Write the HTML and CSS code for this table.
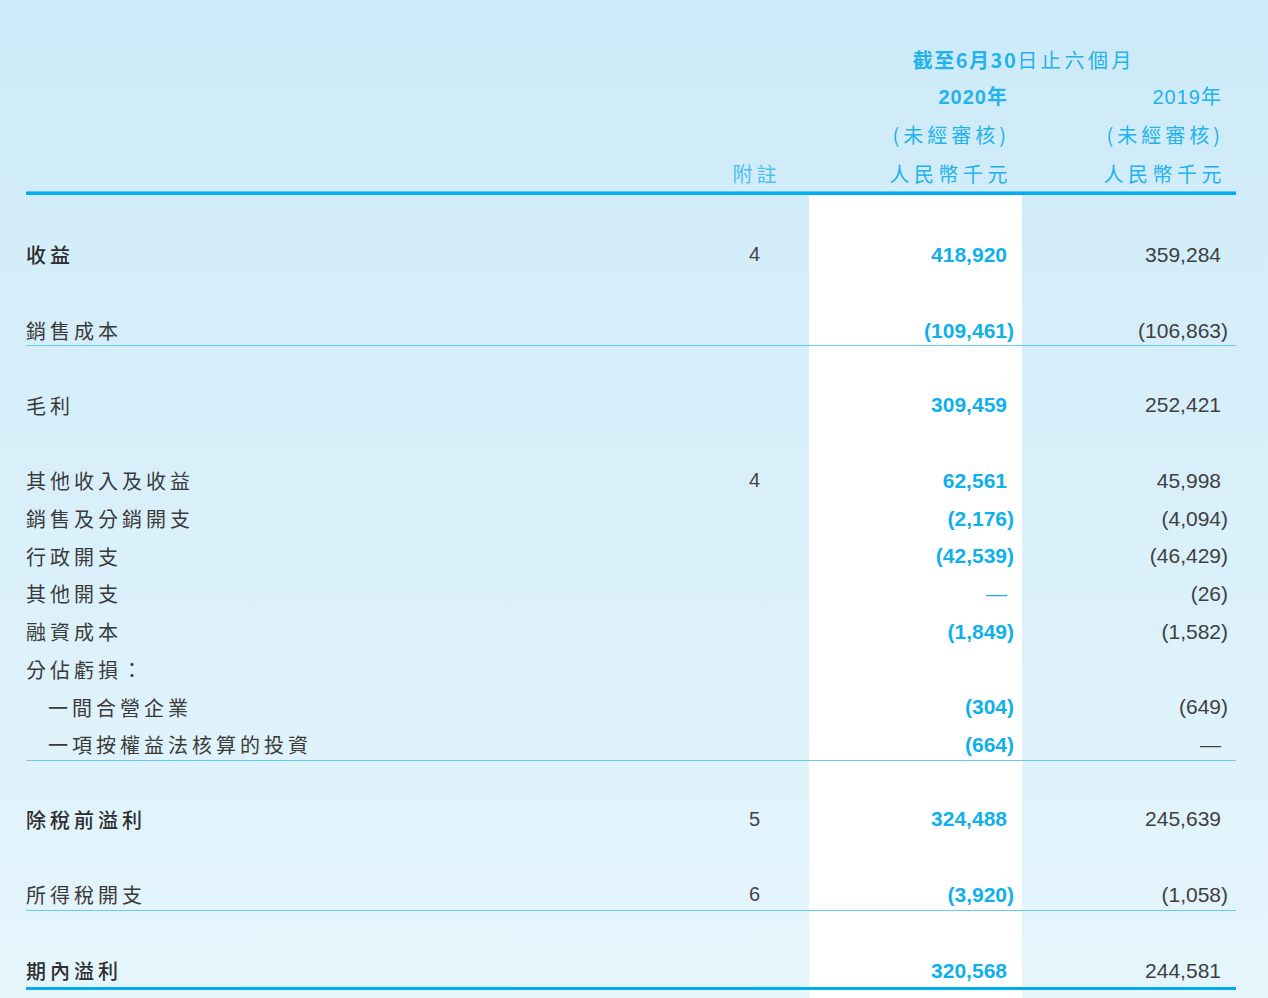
FILE: index.html
```html
<!DOCTYPE html>
<html lang="zh-Hant">
<head>
<meta charset="utf-8">
<title>簡明綜合損益表</title>
<link rel="stylesheet" href="styles.css">
</head>
<body>
<div class="page">
  <div class="head">
    <div class="hrow">
      <div class="period"><b>截至6月30</b>日止六個月</div>
    </div>
    <div class="hrow">
      <div class="hcell cur year">2020年</div>
      <div class="hcell prev year">2019年</div>
    </div>
    <div class="hrow">
      <div class="hcell cur paren">(未經審核)</div>
      <div class="hcell prev paren">(未經審核)</div>
    </div>
    <div class="hrow last">
      <div class="hnote">附註</div>
      <div class="hcell cur">人民幣千元</div>
      <div class="hcell prev">人民幣千元</div>
    </div>
  </div>
  <div class="rule-thick"></div>
  <div class="body">
    <div class="row strong"><div class="lbl">收益</div><div class="note">4</div><div class="amt cur pos">418,920</div><div class="amt prev pos">359,284</div></div>
    <div class="row line gap-b"><div class="lbl">銷售成本</div><div class="note"></div><div class="amt cur">(109,461)</div><div class="amt prev">(106,863)</div></div>
    <div class="row gap-c"><div class="lbl">毛利</div><div class="note"></div><div class="amt cur pos">309,459</div><div class="amt prev pos">252,421</div></div>
    <div class="row gap-b"><div class="lbl">其他收入及收益</div><div class="note">4</div><div class="amt cur pos">62,561</div><div class="amt prev pos">45,998</div></div>
    <div class="row"><div class="lbl">銷售及分銷開支</div><div class="note"></div><div class="amt cur">(2,176)</div><div class="amt prev">(4,094)</div></div>
    <div class="row"><div class="lbl">行政開支</div><div class="note"></div><div class="amt cur">(42,539)</div><div class="amt prev">(46,429)</div></div>
    <div class="row"><div class="lbl">其他開支</div><div class="note"></div><div class="amt cur pos dash">—</div><div class="amt prev">(26)</div></div>
    <div class="row"><div class="lbl">融資成本</div><div class="note"></div><div class="amt cur">(1,849)</div><div class="amt prev">(1,582)</div></div>
    <div class="row"><div class="lbl">分佔虧損：</div><div class="note"></div><div class="amt cur"></div><div class="amt prev"></div></div>
    <div class="row"><div class="lbl sub">一間合營企業</div><div class="note"></div><div class="amt cur">(304)</div><div class="amt prev">(649)</div></div>
    <div class="row line"><div class="lbl sub">一項按權益法核算的投資</div><div class="note"></div><div class="amt cur">(664)</div><div class="amt prev pos dash">—</div></div>
    <div class="row strong gap-c"><div class="lbl">除稅前溢利</div><div class="note">5</div><div class="amt cur pos">324,488</div><div class="amt prev pos">245,639</div></div>
    <div class="row line gap-b"><div class="lbl">所得稅開支</div><div class="note">6</div><div class="amt cur">(3,920)</div><div class="amt prev">(1,058)</div></div>
    <div class="row strong total gap-a"><div class="lbl">期內溢利</div><div class="note"></div><div class="amt cur pos">320,568</div><div class="amt prev pos">244,581</div></div>
  </div>
</div>
</body>
</html>
```

FILE: styles.css
```css
html, body {
  margin: 0;
  padding: 0;
}
body {
  width: 1268px;
  min-height: 998px;
  overflow: hidden;
  background: linear-gradient(to bottom, #cdeaf8 0%, #d9f0fa 50%, #e6f5fc 100%);
  font-family: "Noto Sans CJK TC", "Liberation Sans", sans-serif;
  color: #3c3c3c;
}
.page {
  padding-left: 26px;
  width: 1210px;
}
.head {
  padding-top: 41px;
}
.hrow {
  display: grid;
  grid-template-columns: 674px 109px 213px 214px;
  height: 37.5px;
  align-items: center;
  color: #22b2ec;
  font-size: 20px;
  line-height: 24px;
}
.hrow.last {
  padding-top: 3px;
  height: 34.5px;
}
.period {
  grid-column: 3 / 5;
  text-align: center;
  letter-spacing: 3.6px;
  padding-left: 3px;
  font-weight: 400;
}
.period b {
  font-weight: 700;
  letter-spacing: 1.5px;
}
.hcell {
  text-align: right;
  padding-right: 10px;
  letter-spacing: 4.5px;
}
.hcell.paren {
  letter-spacing: 4px;
  padding-right: 12px;
}
.hcell.cur { grid-column: 3; }
.hcell.prev { grid-column: 4; }
.hcell.year {
  letter-spacing: 1px;
  padding-right: 14px;
  font-family: "Liberation Sans", "Noto Sans CJK TC", sans-serif;
}
.hcell.cur.year { font-weight: 700; }
.hnote {
  grid-column: 2;
  text-align: center;
  letter-spacing: 4px;
  padding-left: 4px;
  color: #4cc0ee;
}
.rule-thick {
  height: 4px;
  background: #00aeef;
  border-top: 1px solid #5cc8f2;
  box-sizing: border-box;
}
.body {
  background: linear-gradient(to right, transparent 783px, #ffffff 783px, #ffffff 996px, transparent 996px);
  padding-top: 41px;
  padding-bottom: 20px;
}
.row {
  display: grid;
  grid-template-columns: 674px 109px 213px 214px;
  height: 37.7px;
  box-sizing: border-box;
  align-items: center;
  font-size: 20px;
}
.row.line {
  height: 34.7px;
  align-items: start;
  padding-top: 4px;
  border-bottom: 1px solid #66ccf2;
}
.row.line > div { line-height: 29px; }
.gap-a { margin-top: 41px; }
.gap-b { margin-top: 38px; }
.gap-c { margin-top: 40px; }
.lbl {
  letter-spacing: 4px;
  color: #3a3a3a;
  white-space: nowrap;
}
.lbl.sub { padding-left: 22px; }
.row.strong .lbl { font-weight: 500; color: #2e2e2e; }
.note {
  text-align: center;
  font-family: "Liberation Sans", sans-serif;
  font-size: 20px;
  color: #444;
}
.amt {
  text-align: right;
  padding-right: 8px;
  font-family: "Liberation Sans", sans-serif;
  font-size: 21px;
}
.amt.cur {
  color: #0fb0ec;
  font-weight: 700;
}
.amt.prev {
  color: #404040;
}
.amt.pos::after {
  content: ")";
  visibility: hidden;
}
.amt.dash { font-weight: 400; }
.row.total {
  height: 38px;
  align-items: start;
  padding-top: 4px;
  border-bottom: 3px solid #00aeef;
}
.row.total > div { line-height: 30px; }
```
